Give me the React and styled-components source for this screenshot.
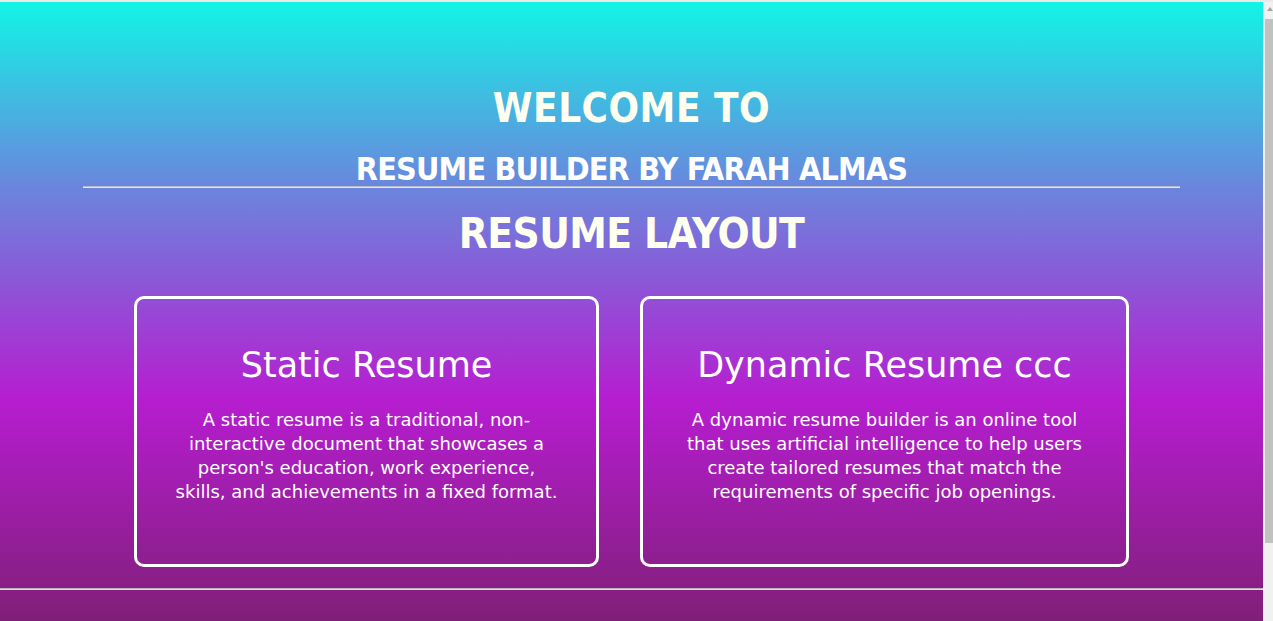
import React from 'react';
import styled, { createGlobalStyle } from 'styled-components';

const GlobalStyle = createGlobalStyle`
  html, body {
    margin: 0;
    padding: 0;
    overflow: hidden;
  }
  body {
    background: #7a1f72;
    border-top: 2px solid #e9e9e9;
    font-family: "DejaVu Sans", Verdana, sans-serif;
  }
`;

const Frame = styled.div`
  display: flex;
  height: calc(100vh - 2px);
`;

const Viewport = styled.main`
  flex: 1;
  min-width: 0;
  overflow: hidden;
`;

const ScrollTrack = styled.div`
  width: 10px;
  flex-shrink: 0;
  background: #f1f1f1;
  display: flex;
  flex-direction: column;
  align-items: flex-end;
`;

const ScrollArrow = styled.div`
  height: 17px;
  width: 100%;
  display: flex;
  align-items: center;
  justify-content: center;
  padding-left: 3px;
  box-sizing: border-box;

  &::before {
    content: '';
    border-left: 3px solid transparent;
    border-right: 3px solid transparent;
    border-bottom: 4px solid #a3a3a3;
    margin-top: -3px;
  }
`;

const ScrollThumb = styled.div`
  width: 8px;
  height: 524px;
  background: #c1c1c1;
`;

const Page = styled.div`
  min-height: 694px;
  background: linear-gradient(180deg, #12f4e6 0px, #6a86dd 184px, #b61dd0 398px, #801f78 619px, #771f70 700px);
  text-align: center;
`;

const Header = styled.header`
  padding-top: 86px;
  display: flex;
  flex-direction: column;
  align-items: center;
`;

const Welcome = styled.h1`
  margin: 0;
  font-size: 40px;
  line-height: 40px;
  font-weight: bold;
  font-stretch: condensed;
  font-family: "DejaVu Sans Condensed", "DejaVu Sans", sans-serif;
  letter-spacing: 0.5px;
  color: #fffff0;
`;

const Byline = styled.h2`
  margin: 25px 0 0;
  font-size: 32px;
  line-height: 32px;
  font-weight: bold;
  font-stretch: condensed;
  font-family: "DejaVu Sans Condensed", "DejaVu Sans", sans-serif;
  letter-spacing: -0.8px;
  color: #ffffff;
`;

const Divider = styled.hr`
  width: 1097px;
  margin: 1px 0 0;
  border: 0;
  border-top: 1px solid #b9b9c4;
  border-bottom: 1px solid #e4e4ea;
`;

const SectionTitle = styled.h2`
  margin: 25px 0 0;
  font-size: 42px;
  line-height: 42px;
  font-weight: bold;
  font-stretch: condensed;
  font-family: "DejaVu Sans Condensed", "DejaVu Sans", sans-serif;
  letter-spacing: -0.6px;
  color: #fffff0;
`;

const CardRow = styled.section`
  display: flex;
  justify-content: center;
  gap: 41px;
  margin-top: 41px;
`;

const Card = styled.div`
  box-sizing: border-box;
  width: ${(p) => p.$width}px;
  height: 271px;
  border: 3px solid #ffffff;
  border-radius: 10px;
  padding: 48px ${(p) => p.$pad}px 0;
  color: #ffffff;
`;

const CardTitle = styled.h3`
  margin: 0;
  font-size: 35px;
  line-height: 36px;
  font-weight: normal;
`;

const CardText = styled.p`
  margin: 25px 0 0;
  font-size: 18px;
  line-height: 24px;
`;

const FooterRule = styled.hr`
  margin: 21px 0 0;
  border: 0;
  border-top: 1px solid #b7b7b7;
  border-bottom: 1px solid #dcdcdc;
`;

const cards = [
  {
    title: 'Static Resume',
    width: 465,
    pad: 36,
    text: "A static resume is a traditional, non-interactive document that showcases a person's education, work experience, skills, and achievements in a fixed format.",
  },
  {
    title: 'Dynamic Resume ccc',
    width: 489,
    pad: 42,
    text: 'A dynamic resume builder is an online tool that uses artificial intelligence to help users create tailored resumes that match the requirements of specific job openings.',
  },
];

export default function App() {
  return (
    <>
      <GlobalStyle />
      <Frame>
        <Viewport>
          <Page>
            <Header>
              <Welcome>WELCOME TO</Welcome>
              <Byline>RESUME BUILDER BY FARAH ALMAS</Byline>
              <Divider />
              <SectionTitle>RESUME LAYOUT</SectionTitle>
            </Header>
            <CardRow>
              {cards.map((card) => (
                <Card key={card.title} $width={card.width} $pad={card.pad}>
                  <CardTitle>{card.title}</CardTitle>
                  <CardText>{card.text}</CardText>
                </Card>
              ))}
            </CardRow>
            <FooterRule />
          </Page>
        </Viewport>
        <ScrollTrack>
          <ScrollArrow />
          <ScrollThumb />
        </ScrollTrack>
      </Frame>
    </>
  );
}
